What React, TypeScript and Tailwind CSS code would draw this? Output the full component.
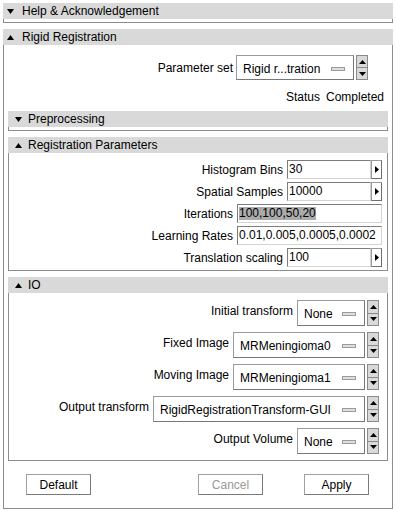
import type { ReactNode } from 'react';

function Tri({ up }: { up?: boolean }) {
  return (
    <svg width="7" height="5" viewBox="0 0 7 5" className="shrink-0">
      {up ? <polygon points="0,5 7,5 3.5,0" fill="#000" /> : <polygon points="0,0 7,0 3.5,5" fill="#000" />}
    </svg>
  );
}

function Header({ title, open, sub }: { title: string; open?: boolean; sub?: boolean }) {
  return (
    <div className={`flex h-[16px] items-center bg-[#d9d9d9] ${sub ? 'pl-[7px]' : 'pl-[4px]'}`}>
      <Tri up={open} />
      <span className={`${sub ? 'ml-[6px]' : 'ml-[8px]'} leading-none`}>{title}</span>
    </div>
  );
}

function Collapsed({ title, sub }: { title: string; sub?: boolean }) {
  return (
    <div>
      <Header title={title} sub={sub} />
      <div className="h-[4px] border-x border-b border-[#8c8c8c]" />
    </div>
  );
}

function Frame({ title, sub, className, children }: { title: string; sub?: boolean; className?: string; children: ReactNode }) {
  return (
    <div className="flex flex-col">
      <Header title={title} open sub={sub} />
      <div className={`border-x border-b border-[#8c8c8c] ${className ?? ''}`}>{children}</div>
    </div>
  );
}

function Spinner({ h }: { h: string }) {
  return (
    <div className={`flex w-[12px] flex-col border border-[#8a8a8a] bg-[#d9d9d9] ${h}`}>
      <div className="flex flex-1 items-center justify-center border-b border-[#8a8a8a]">
        <svg width="7" height="4" viewBox="0 0 7 4">
          <polygon points="0,4 7,4 3.5,0" fill="#000" />
        </svg>
      </div>
      <div className="flex flex-1 items-center justify-center">
        <svg width="7" height="4" viewBox="0 0 7 4">
          <polygon points="0,0 7,0 3.5,4" fill="#000" />
        </svg>
      </div>
    </div>
  );
}

function OptionMenu({ value, w, h = 'h-[26px]' }: { value: string; w: string; h?: string }) {
  return (
    <div className="flex items-start gap-[2px]">
      <div
        className={`flex items-center justify-between border border-[#9a9a9a] border-b-[#777] border-r-[#777] bg-white pl-[6px] pr-[8px] pt-[2px] ${w} ${h}`}
      >
        <span className="whitespace-nowrap">{value}</span>
        <span className="ml-[6px] h-[4px] w-[14px] shrink-0 border border-[#9a9a9a] bg-[#dedede]" />
      </div>
      <Spinner h={h} />
    </div>
  );
}

function Entry({ value, w, arrow, selected }: { value: string; w: string; arrow?: boolean; selected?: boolean }) {
  return (
    <div className="flex h-[19px]">
      <div className={`flex items-center border border-[#7c7c7c] border-b-[#d4d4d4] border-r-[#d4d4d4] bg-white pl-[1px] ${w}`}>
        <span className={`whitespace-nowrap leading-[13px] ${selected ? 'bg-[#ababab]' : ''}`}>{value}</span>
      </div>
      {arrow && (
        <div className="flex w-[11px] items-center justify-center border border-[#9a9a9a] border-b-[#6e6e6e] border-r-[#6e6e6e] bg-white">
          <svg width="4" height="7" viewBox="0 0 4 7">
            <polygon points="0,0 4,3.5 0,7" fill="#000" />
          </svg>
        </div>
      )}
    </div>
  );
}

function Button({ label, disabled }: { label: string; disabled?: boolean }) {
  return (
    <div
      className={`flex h-[21px] w-[65px] items-center justify-center border border-[#a0a0a0] border-b-[#7a7a7a] border-r-[#7a7a7a] bg-white ${
        disabled ? 'text-[#9a9a9a]' : 'text-black'
      }`}
    >
      {label}
    </div>
  );
}

export default function App() {
  return (
    <div className="h-[512px] w-[396px] overflow-hidden bg-white px-[3px] pt-[3px] font-['Liberation_Sans',Arial,sans-serif] text-[12px] leading-[14px] text-black">
      <Collapsed title="Help & Acknowledgement" />

      <div className="mt-[6px]">
        <Frame title="Rigid Registration" className="h-[464px] px-[4px]">
          <div className="mt-[10px] flex h-[25px] items-center justify-end gap-[3px] pr-[20px]">
            <span>Parameter set</span>
            <OptionMenu value="Rigid r...tration" w="w-[118px]" h="h-[25px]" />
          </div>

          <div className="mt-[9px] flex h-[16px] items-center justify-end gap-[6px] pr-[4px]">
            <span>Status</span>
            <span>Completed</span>
          </div>

          <div className="mt-[6px]">
            <Collapsed title="Preprocessing" sub />
          </div>

          <div className="mt-[6px]">
            <Frame title="Registration Parameters" sub className="flex flex-col gap-[3px] pb-[3px] pr-[5px] pt-[7px]">
              <div className="flex h-[19px] items-center justify-end gap-[4px]">
                <span>Histogram Bins</span>
                <Entry value="30" w="w-[84px]" arrow />
              </div>
              <div className="flex h-[19px] items-center justify-end gap-[4px]">
                <span>Spatial Samples</span>
                <Entry value="10000" w="w-[84px]" arrow />
              </div>
              <div className="flex h-[19px] items-center justify-end gap-[4px]">
                <span>Iterations</span>
                <Entry value="100,100,50,20" w="w-[145px]" selected />
              </div>
              <div className="flex h-[19px] items-center justify-end gap-[4px]">
                <span>Learning Rates</span>
                <Entry value="0.01,0.005,0.0005,0.0002" w="w-[145px]" />
              </div>
              <div className="flex h-[19px] items-center justify-end gap-[4px]">
                <span>Translation scaling</span>
                <Entry value="100" w="w-[84px]" arrow />
              </div>
            </Frame>
          </div>

          <div className="mt-[6px]">
            <Frame title="IO" sub className="flex flex-col gap-[6px] pb-[6px] pr-[8px] pt-[7px]">
              <div className="flex h-[26px] items-start justify-end gap-[4px]">
                <span className="mt-[4px]">Initial transform</span>
                <OptionMenu value="None" w="w-[68px]" />
              </div>
              <div className="flex h-[26px] items-start justify-end gap-[4px]">
                <span className="mt-[4px]">Fixed Image</span>
                <OptionMenu value="MRMeningioma0" w="w-[132px]" />
              </div>
              <div className="flex h-[26px] items-start justify-end gap-[4px]">
                <span className="mt-[4px]">Moving Image</span>
                <OptionMenu value="MRMeningioma1" w="w-[132px]" />
              </div>
              <div className="flex h-[26px] items-start justify-end gap-[4px]">
                <span className="mt-[4px]">Output transform</span>
                <OptionMenu value="RigidRegistrationTransform-GUI" w="w-[212px]" />
              </div>
              <div className="flex h-[26px] items-start justify-end gap-[4px]">
                <span className="mt-[4px]">Output Volume</span>
                <OptionMenu value="None" w="w-[68px]" />
              </div>
            </Frame>
          </div>

          <div className="mt-[13px] flex items-center pl-[18px]">
            <Button label="Default" />
            <div className="ml-[107px]">
              <Button label="Cancel" disabled />
            </div>
            <div className="ml-[41px]">
              <Button label="Apply" />
            </div>
          </div>
        </Frame>
      </div>
    </div>
  );
}
